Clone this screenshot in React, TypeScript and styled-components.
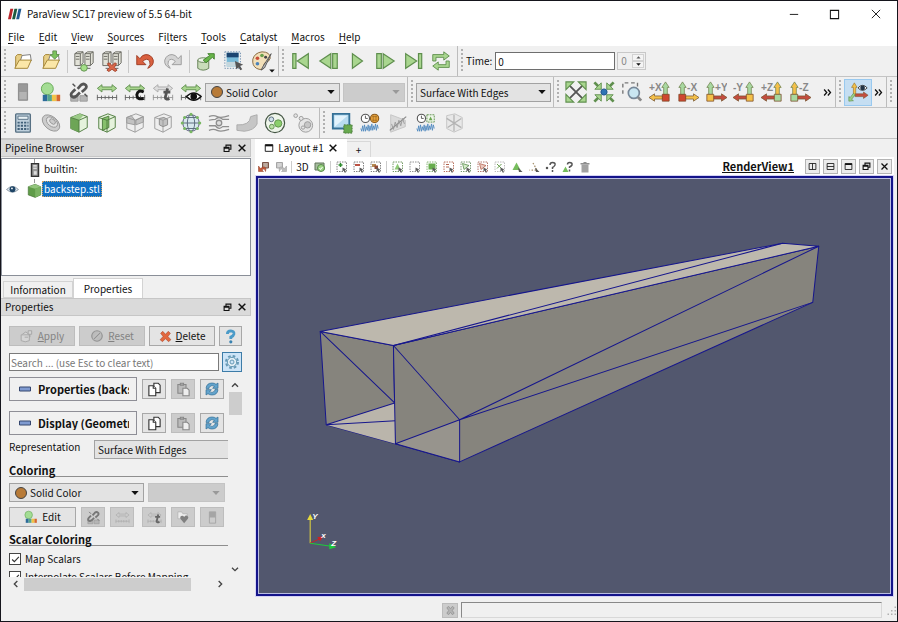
import React from 'react';
import styled, { createGlobalStyle, css } from 'styled-components';

const UI = `"Noto Sans CJK JP", "Liberation Sans", sans-serif`;
const G = '#a9d68f';
const GD = '#5f8f4e';
const GR = '#8f8f8f';

const Global = createGlobalStyle`
  * { box-sizing: border-box; }
  body { margin: 0; background: #f0f0f0; }
  button, input, select { font: inherit; color: inherit; margin: 0; padding: 0; }
  body, #root { font-family: ${UI}; font-size: 10px; line-height: 14px; color: #111; }
`;

/* ---------- icon drawings, 24 x 24 ---------- */

const Arrow4 = ({ out }: { out: boolean }) => (
  <>
    {out && <path d="M5 5L19 19M19 5L5 19" stroke="#555" strokeWidth="2" />}
    {[0, 90, 180, 270].map((r) => (
      <g key={r} transform={`rotate(${r} 12 12)`}>
        {out ? (
          <path d="M1 1H9.500L1 9.500Z" fill={G} stroke={GD} strokeWidth="1.200" />
        ) : (
          <>
            <path d="M1.500 1.500L6 6" stroke={GD} strokeWidth="3" />
            <path d="M9 2V9H2Z" fill={G} stroke={GD} />
          </>
        )}
      </g>
    ))}
    {!out && <circle cx="12" cy="12" r="3.4" fill="#2f74b5" stroke="#1f5288" />}
  </>
);

const Folder = () => (
  <>
    <path d="M4 20V7l2-2h4l2 2h6v5" fill="#e8cf86" stroke="#a08030" />
    <path d="M9 12l2-6 9-1 1 7" fill="#fff" stroke="#777" />
    <path d="M3 20L8 11H21L17 20Z" fill="#fbe7a8" stroke="#a08030" />
  </>
);

const Servers = () => (
  <>
    {[2, 13].map((x) => (
      <g key={x}>
        <path d={`M${x} 4l3-2h6v12l-3 3h-6z`} fill="#e2e2d8" stroke="#66665e" />
        <path d={`M${x} 4h6v13M${x + 6} 4l3-2M${x + 1} 7h4M${x + 1} 10h4`} fill="none" stroke="#66665e" />
      </g>
    ))}
    <path d="M5 20h14" stroke="#555" />
  </>
);

const Cube = ({ gray, inner }: { gray?: boolean; inner?: React.ReactNode }) => (
  <>
    <path d="M3 6L13 2L21 5V17L12 22L3 18Z" fill={gray ? '#eee' : '#e5f2dc'} stroke={gray ? '#999' : '#4c7a3c'} />
    {inner}
    <path d="M3 6L12 9L21 5M12 9V22" fill="none" stroke={gray ? '#999' : '#4c7a3c'} />
  </>
);

const Ruler = ({ c = '#666', a = G, s = GD }: { c?: string; a?: string; s?: string }) => (
  <>
    <path d="M1.5 8L6.5 4V6.5H17.500V4L22.500 8L17.500 12V9.500H6.500V12Z" fill={a} stroke={s} />
    <path d="M1 18H23M1.500 15V21M6 16V20M10 16V20M14 16V20M18 16V20M22.500 15V21" stroke={c} fill="none" />
  </>
);

const Chain = ({ c = '#555' }: { c?: string }) => (
  <>
    <path d="M3 16h8v6H3zM13 16h8v6h-8z" fill="#b5b5b5" stroke="#999" />
    <path d="M10.500 8.500L14 4.500Q17 2 19.500 4.500Q21 7 18.500 9L15 12M13 12.500L9 16.500Q6 19 3.800 16.500Q2.500 14 5 12L8 9" fill="none" stroke={c} strokeWidth="3" />
    <path d="M5 3l3 3M18 14l3 3" stroke={c} strokeWidth="1.600" />
  </>
);

const Axis = ({ up, side, box, left, label }: { up: string; side: string; box: string; left: boolean; label: string }) => (
  <>
    <g transform={left ? undefined : 'translate(24 0) scale(-1 1)'}>
      <path d="M0 18L6 14V16.300H15V19.700H6V22Z" fill={side} stroke="#77552f" strokeWidth=".8" />
      <path d="M18 1L22 7H20V15H16V7H14Z" fill={up} stroke="#6c7f4a" strokeWidth=".8" />
      <path d="M14.500 14.500H22V22H14.500Z" fill={box} stroke="#774422" strokeWidth=".8" />
    </g>
    <text x={left ? 0 : 11} y="11" fontSize="11" fontFamily="Liberation Sans" fontWeight="bold" fill="#888">{label}</text>
  </>
);

const Plot = ({ gray }: { gray?: boolean }) => (
  <path d="M2 18l1 3 1-6 1 6 1-7 1 7 1-5 1 4 1-6 1 7 1-6 1 5 1-7 1 7 1-5 1 4 1-6 1 7 1-6 1 4" fill="none" stroke={gray ? '#999' : '#4a86bd'} strokeWidth=".9" />
);
const Clock = () => (
  <>
    <circle cx="7" cy="7" r="4.500" fill="#fff" stroke="#555" strokeWidth="1.200" />
    <path d="M7 4V7H9.500" fill="none" stroke="#555" />
  </>
);

const Sel = ({ c = '#777', children }: { c?: string; children?: React.ReactNode }) => (
  <>
    <rect x="2" y="2" width="19" height="19" fill="none" stroke={c} strokeWidth="1.800" strokeDasharray="3 2" />
    {children}
    <path d="M13 13L21 17L18 18L20 23L17 23L16 19L13 21Z" fill="#5a5a5a" />
  </>
);

const drawings: Record<string, React.ReactNode> = {
  open: <Folder />,
  save: <><Folder /><path d="M14 1h4v4h3l-5 5-5-5h3z" fill="#7cc35c" stroke={GD} /></>,
  connect: <><Servers /><circle cx="12" cy="19.500" r="3.600" fill="#a5e089" stroke={GD} /></>,
  disconnect: <><Servers /><path d="M7 15l2-1 3 3 3-3 2 1-2.500 4 3 3-2 1.500-3.500-2.500-3.500 2.500-2-1.500 3-3z" fill="#d9684a" stroke="#a2432c" /></>,
  undo: <path d="M3 6V16H13L9.500 12.500Q14 8 17 12Q19 15.500 15 20Q22 17 21 11Q19 5 13 5Q9 5 6.500 9.500Z" fill="#d9603f" stroke="#9c3b22" />,
  redo: <path d="M21 6V16H11L14.500 12.500Q10 8 7 12Q5 15.500 9 20Q2 17 3 11Q5 5 11 5Q15 5 17.500 9.500Z" fill="#d4d4d4" stroke="#999" />,
  load: <><path d="M3 11V20Q9 24 15 20V11" fill="#c9dcb9" stroke="#5f7d50" /><ellipse cx="9" cy="11" rx="6" ry="2.500" fill="#edf3e8" stroke="#5f7d50" /><path d="M9 11L16 6L14 4H21V10L19 8L12 14Z" fill="#68b54a" stroke="#3f7e2b" /></>,
  find: <><path d="M4 3H17V18H4Z" fill="#78bad8" /><path d="M4 3H17V8H4Z" fill="#1c4570" /><path d="M4 13H17V18H4Z" fill="#c5d6dc" /><path d="M2 2H19V20H2Z" fill="none" stroke="#68a" strokeDasharray="1.500 1.500" /><path d="M13 12L22 16L18.500 17.500L21 21L19 22L17 19L14.500 21Z" fill="#555" /></>,
  palette: <><path d="M12 2Q21 2 21 9Q20 13 15 14Q13 16 15 19Q12 23 6 20Q1 17 2 10Q4 3 12 2Z" fill="#f2dfb8" stroke="#80633a" /><circle cx="7" cy="9" r="2" fill="#c94d38" /><circle cx="12" cy="6" r="2" fill="#68a04a" /><circle cx="16" cy="8" r="1.600" fill="#444" /><circle cx="7" cy="15" r="2" fill="#4c83ba" /><path d="M22 4L13 18L11 22L15 19Z" fill="#bbb" stroke="#555" /></>,
  first: <path d="M3 4H6.500V20H3ZM20 4V20L8 12Z" fill={G} stroke={GD} strokeWidth="1.300" />,
  prev: <path d="M14 4V20L2 12ZM16 4H21V20H16Z" fill={G} stroke={GD} strokeWidth="1.300" />,
  play: <path d="M7 4L18 12L7 20Z" fill={G} stroke={GD} strokeWidth="1.300" />,
  next: <path d="M3 4H8V20H3ZM10 4L22 12L10 20Z" fill={G} stroke={GD} strokeWidth="1.300" />,
  last: <path d="M4 4L16 12L4 20ZM18 4H21.500V20H18Z" fill={G} stroke={GD} strokeWidth="1.300" />,
  loop: <path d="M3 12V5H15V2L21 6.500L15 11V8H6.500V12ZM21 12V19H9V22L3 17.500L9 13V16H17.500V12Z" fill={G} stroke={GD} />,
  bar: <><path d="M7 3H17V21H7Z" fill="#999" stroke="#888" /><path d="M8 12H16V20H8Z" fill="#b4b4b4" /></>,
  colormap: <><circle cx="8" cy="8.500" r="6.500" fill="#a4dd94" stroke="#62a552" /><path d="M3 15H8V22H3Z" fill="#2c6b99" /><path d="M8 15H13V22H8Z" fill="#55a48d" /><path d="M13 15H18V22H13Z" fill="#f0c348" /><path d="M18 15H22V22H18Z" fill="#d6672f" /></>,
  chain: <Chain />,
  ruler: <Ruler />,
  rulerC: <><Ruler /><path d="M21.500 12Q15 9 14 15Q14 21 21.500 19" fill="none" stroke="#111" strokeWidth="3.200" /></>,
  rulerT: <><Ruler a="#ddd" s="#aaa" c="#999" /><path d="M17 8L14.500 18Q15 21 19 19M12.500 12H20" fill="none" stroke="#555" strokeWidth="3" /></>,
  rulerEye: <><Ruler /><path d="M7 17Q15 9 23 17Q15 25 7 17Z" fill="#fff" stroke="#111" strokeWidth="1.600" /><circle cx="15" cy="17" r="3.600" fill="#111" /></>,
  calc: <><rect x="4" y="2" width="16" height="20" rx="1" fill="#bfd0dc" stroke="#577083" strokeWidth="1.500" /><path d="M6.500 4.500H17.500V8H6.500Z" fill="#e8f1f5" stroke="#577083" /><path d="M6 11.500H18M6 15H18M6 18.500H18" stroke="#416079" strokeWidth="2" strokeDasharray="2.400 1.200" /></>,
  contour: <g fill="#ccc" stroke="#999"><ellipse cx="12" cy="12" rx="11" ry="7" transform="rotate(40 12 12)" /><ellipse cx="13" cy="11" rx="7" ry="4.500" fill="#e2e2e2" transform="rotate(40 13 11)" /><ellipse cx="14" cy="10.500" rx="3.600" ry="2.300" transform="rotate(40 14 10)" /></g>,
  clip: <Cube inner={<><path d="M3 6L12 9V22L3 18Z" fill="#6da556" /><path d="M3 6L13 2L17 3.500L12 9Z" fill="#9ccb88" /></>} />,
  slice: <Cube inner={<path d="M7 7L14 4.500V17L7 20Z" fill="#86c06c" stroke="#4c7a3c" />} />,
  threshold: <Cube gray inner={<path d="M3 6L8 4L12 9V14L3 12ZM13 9L21 5V11L13 14Z" fill="#c2c2c2" stroke="#999" />} />,
  subset: <Cube gray inner={<path d="M8 7L13 6L17 8V14L12 16L8 14Z" fill="#c2c2c2" stroke="#888" />} />,
  glyph: <><circle cx="12" cy="12" r="9" fill="#d8e8ee" stroke="#557" /><ellipse cx="12" cy="12" rx="4" ry="9" fill="none" stroke="#567" /><path d="M3 12H21M5 6H19M5 18H19" stroke="#567" />{[[12, 2.500], [12, 21.500], [2.500, 12], [21.500, 12], [5, 6], [19, 6], [5, 18], [19, 18]].map(([x, y]) => <circle key={`${x}-${y}`} cx={x} cy={y} r="1.700" fill="#78b762" />)}</>,
  stream: <g fill="none" stroke={GR} strokeWidth="1.400"><path d="M1 5Q6 3 10 5T23 4M1 9Q5 8 8 8Q12 4 16 8H23M1 15H8Q12 20 16 16H23M1 20Q6 18 10 20T23 19" /><circle cx="12" cy="12" r="3" fill="#ddd" /></g>,
  warp: <path d="M1 14Q15 15 16 5L23 3V13Q20 20 9 21L1 20Z" fill="#c6c6c6" stroke="#aaa" />,
  group: <><circle cx="12" cy="12" r="10.500" fill="#eef5ea" stroke="#454" strokeWidth="1.300" /><circle cx="8" cy="8" r="2.600" fill="#cfe0ea" stroke="#567" /><circle cx="15.500" cy="12.500" r="4" fill="#8bcf6c" stroke={GD} /><circle cx="8.500" cy="16" r="2.600" fill="#b9e0a5" stroke={GD} /></>,
  extract: <g fill="#e5e5e5" stroke="#999"><circle cx="15" cy="14.500" r="7.500" /><circle cx="4" cy="4" r="2" /><circle cx="10" cy="7" r="2.200" /><circle cx="17" cy="14" r="3.500" fill="#c6c6c6" /><circle cx="12" cy="17" r="1.800" /></g>,
  selView: <><path d="M2 2H20V18H2Z" fill="#b8dcf1" stroke="#347096" strokeWidth="2" /><path d="M4 4H18L4 16Z" fill="#e2f3fc" /><path d="M14 14H23V23H14Z" fill="#68a94f" stroke="#47773a" strokeDasharray="2 1" /></>,
  plotClock: <><Clock /><circle cx="17" cy="7" r="4.500" fill="#e8a33c" stroke="#8a5a1c" strokeWidth="1.200" /><path d="M14.500 5H19.500M14.500 9H19.500M15.500 4V10M18.500 4V10" stroke="#9b6a24" strokeWidth=".8" /><Plot /></>,
  plotLine: <><path d="M4 3L20 9V16L4 22Z" fill="#dadada" stroke="#c4c4c4" /><path d="M3 20L21 5" stroke="#888" strokeWidth="1.300" /><path d="M5 13l2 6 2-8 2 6 2-8 2 6 2-8 2 6" fill="none" stroke="#999" /></>,
  plotSel: <><Clock /><path d="M13 3H21V11H13Z" fill="#edf6e8" stroke={GD} strokeDasharray="2 1" /><path d="M17 5l2 4h-4z" fill="#69a64f" /><Plot /></>,
  probe: <g stroke="#c4c4c4" fill="#e8e8e8"><path d="M4 4L13 2L21 6V18L12 22L4 18Z" /><path d="M12 3V21M4 7L20 17M20 7L5 17" stroke="#b4b4b4" strokeWidth="1.400" /></g>,
  reset: <Arrow4 out />,
  zoomData: <Arrow4 out={false} />,
  zoomBox: <><path d="M2 14V2H18V8" fill="none" stroke="#777" strokeWidth="1.500" strokeDasharray="4 3" /><circle cx="14" cy="13" r="6" fill="#c9e6f2" stroke="#789" strokeWidth="1.800" /><path d="M18.500 17.500L22 21.500" stroke="#888" strokeWidth="3" /></>,
  px: <Axis left label="+X" up="#a8d8a0" side="#f4c04a" box="#cf4730" />,
  nx: <Axis left={false} label="-X" up="#a8d8a0" side="#f4c04a" box="#cf4730" />,
  py: <Axis left={false} label="+Y" up="#a8d8a0" side="#c44c3e" box="#f4c04a" />,
  ny: <Axis left label="-Y" up="#a8d8a0" side="#c44c3e" box="#f4c04a" />,
  pz: <Axis left label="+Z" up="#f4c04a" side="#c44c3e" box="#a8d8a0" />,
  nz: <Axis left={false} label="-Z" up="#f4c04a" side="#c44c3e" box="#a8d8a0" />,
  axes: <><path d="M8 2L11 7H9.500V16H7V7H5Z" fill="#f4c04a" stroke="#98752a" strokeWidth=".7" /><path d="M9 14H18V12L23 15.500L18 19V17H9Z" fill="#c44c3e" stroke="#853" strokeWidth=".7" /><path d="M9 15L5 20L7 21.500L2 22V17L3.500 18L7 13.500Z" fill="#9ad08a" stroke={GD} strokeWidth=".7" /><path d="M12 7.500Q17 2 22 7.500Q17 13 12 7.500Z" fill="#fff" stroke="#333" /><circle cx="17" cy="7.500" r="2.600" fill="#234" /></>,
  eye: <><path d="M1 12Q12 1 23 12Q12 22 1 12Z" fill="#dfe9f2" stroke="#7a8894" strokeWidth="1.500" /><circle cx="12" cy="11.500" r="5.500" fill="#1f4566" /><circle cx="11" cy="10" r="1.600" fill="#fff" /></>,
  server: <><path d="M6 1H18V23H6Z" fill="#999" stroke="#333" strokeWidth="2.500" /><path d="M9 5H15M9 9H15" stroke="#eee" strokeWidth="2" /><path d="M10 14H15V20H10Z" fill="#ddd" /></>,
  solid: <><path d="M2 6L13 2L22 6V19L13 23L2 19Z" fill="#5f9b48" stroke="#456f35" /><path d="M2 6L13 2L22 6L13 9Z" fill="#93c57d" /><path d="M13 9L22 6V19L13 23Z" fill="#7ab262" /></>,
  apply: <g fill="#d5d5d5" stroke="#a3a3a3" strokeWidth="1.500"><path d="M2 10H16V20Q9 24 2 20Z" /><path d="M4 9L10 5L14 8M14 3h6v6h-6zM17 9v5" /><path d="M8 14h6" /></g>,
  no: <g fill="#bcbcbc" stroke="#949494" strokeWidth="2"><circle cx="12" cy="12" r="9" /><path d="M6 18L18 6" strokeWidth="4" stroke="#d4d4d4" /><path d="M6 18L18 6" /></g>,
  del: <path d="M3 6L7 2.500L12 8L17 2.500L21 6L16.500 12L22 18L17.500 21.500L12 16L6.500 21.500L2 18L7.500 12Z" fill="#e2683f" stroke="#a8452a" />,
  help: <><path d="M7 8Q7 3 12.500 3Q18 3.500 17.500 8Q17 11 12.500 13V16" fill="none" stroke="#4b9bc8" strokeWidth="4.500" /><circle cx="12.500" cy="20.500" r="2.500" fill="#3982b0" /></>,
  gear: <><circle cx="12" cy="12" r="9" fill="none" stroke="#6699b5" strokeWidth="3" strokeDasharray="4 3.060" /><circle cx="12" cy="12" r="7" fill="#e4eff5" stroke="#6699b5" strokeWidth="1.500" /><circle cx="12" cy="12" r="3" fill="#cde4f7" stroke="#6699b5" strokeWidth="1.500" /></>,
  copy: <g fill="#fff" stroke="#333" strokeWidth="1.800"><path d="M11 2H18L21 5V17H11Z" /><path d="M3 6H10L14 10V22H3Z" /><path d="M10 6V10H14" /></g>,
  paste: <g fill="#bbb" stroke="#888" strokeWidth="1.800"><path d="M3 4H16V18H3Z" /><path d="M7 2h5v3H7z" /><path d="M11 10H18L21 13V22H11Z" fill="#eee" /></g>,
  refresh: <g fill="#62a3cc" stroke="#2f6b93" strokeWidth="1"><path d="M3 11Q4 3 12 3Q16 3 18 5L21 3V11H13L15.500 8Q12 5 8 9L7 12Z" /><path d="M21 13Q20 21 12 21Q8 21 6 19L3 21V13H11L8.500 16Q12 19 16 15L17 12Z" /></g>,
  grayChain: <Chain c="#777" />,
  grayRuler: <Ruler a="#ccc" s="#aaa" c="#aaa" />,
  grayRulerT: <><Ruler a="#ccc" s="#aaa" c="#aaa" /><path d="M18 7L15.500 18Q16 21 20 19M13 11H21" fill="none" stroke="#666" strokeWidth="3" /></>,
  heart: <><path d="M3 3H9L11 6H18V14H3Z" fill="#ececec" stroke="#aaa" /><path d="M13 21L7 14Q6 9 10 9Q12 9 13 11Q15 8 18 9Q21 11 19 14Z" fill="#808080" /></>,
  grayBar: <><path d="M7 3H17V21H7Z" fill="#ccc" stroke="#a5a5a5" strokeWidth="1.500" /><path d="M7 3H17V12H7Z" fill="#a5a5a5" /></>,
  camUndo: <><path d="M9 3H21V14H9Z" fill="#b09a8e" stroke="#7b5346" strokeWidth="2" /><path d="M12 6H18M12 10H18" stroke="#e5d8d0" /><path d="M1 10V21H11L8 18Q13 13 15 21Q18 11 10 12L5 15Z" fill="#c4593a" stroke="#8d3a22" /></>,
  camRedo: <><path d="M3 3H15V14H3Z" fill="#ccc" stroke="#a5a5a5" strokeWidth="2" /><path d="M6 6H12M6 10H12" stroke="#eee" /><path d="M23 10V21H13L16 18Q11 13 9 21Q6 11 14 12L19 15Z" fill="#bcbcbc" stroke="#999" /></>,
  camera: <><path d="M2 4H20V18H2Z" fill="#a8bda0" stroke="#60755a" strokeWidth="2" /><circle cx="14" cy="14" r="7" fill="#9cd585" stroke="#58884a" strokeWidth="2" /><path d="M11 14l2 3 4-5" fill="none" stroke="#fff" strokeWidth="2" /></>,
  selAdd: <Sel><path d="M5 8H13M9 4V12" stroke="#2e8b2e" strokeWidth="3" /></Sel>,
  selSub: <Sel><path d="M4 8H14" stroke="#b23a2a" strokeWidth="3.500" /></Sel>,
  selTog: <Sel><path d="M4 6H12V12H4Z" fill="#b78a52" /><path d="M9 9H16V16H9Z" fill="#8f4936" /></Sel>,
  sCells: <Sel c="#699158"><path d="M11 5L17 17H5Z" fill="#8fcb76" /></Sel>,
  sPts: <Sel c="#888" />,
  sFrC: <Sel c="#7fae6d"><path d="M5 5H19V17H5Z" fill="#67ad4d" /></Sel>,
  sFrP: <Sel c="#b36550"><path d="M6 7H12M6 12H12" stroke="#b36550" strokeWidth="2" /></Sel>,
  sPoC: <Sel c="#6f8f66"><path d="M5 5L18 9L8 17Z" fill="#d5ebcb" stroke="#4f8740" strokeWidth="1.500" /></Sel>,
  sPoP: <Sel c="#a96a5d"><path d="M5 5L18 9L8 17Z" fill="#eac9c0" stroke="#b35d49" strokeWidth="1.500" /></Sel>,
  sBlk: <Sel c="#b5b5b5"><path d="M6 6L15 15M15 6L6 15" stroke="#69a050" strokeWidth="2" /></Sel>,
  iC: <><path d="M11 3L19 18H3Z" fill="#76bd5c" /><path d="M14 13L23 22H16Z" fill="#555" /></>,
  iP: <><path d="M10 4L18 18H3" fill="none" stroke="#a48d68" strokeWidth="2.500" strokeDasharray="3 3" /><path d="M14 13L23 22H16Z" fill="#555" /></>,
  hP: <><path d="M10 8Q10 3 15 3Q21 3 20 8Q18 12 15 13V16M15 18V22" fill="none" stroke="#555" strokeWidth="3" /><circle cx="4" cy="14" r="2.500" fill="#555" /></>,
  hC: <><path d="M11 7Q11 3 15 3Q21 3 20 8Q18 11 15 12V14M15 17V21" fill="none" stroke="#555" strokeWidth="3" /><path d="M7 11L13 22H1Z" fill="#76bd5c" /></>,
  trash: <><path d="M5 7H19V23H5Z" fill="#a2a2a2" /><path d="M3 4H21V7H3ZM9 2H15V4H9Z" fill="#8f8f8f" /></>,
  stop: <path d="M4 6L8 3L12 8L16 3L20 6L16 12L20 18L16 21L12 16L8 21L4 18L8 12Z" fill="#b3b3b3" stroke="#8c8c8c" strokeWidth="1.500" />,
  winSplitH: <path d="M3 4H21V20H3ZM12 4V20" fill="none" stroke="#111" strokeWidth="2.200" />,
  winSplitV: <path d="M3 4H21V20H3ZM3 12H21" fill="none" stroke="#111" strokeWidth="2.200" />,
  winMax: <><path d="M3 4H21V20H3Z" fill="none" stroke="#111" strokeWidth="2.200" /><path d="M3 6H21" stroke="#111" strokeWidth="4" /></>,
  winFloat: <><path d="M8 8V3H21V14H16" fill="none" stroke="#111" strokeWidth="3" /><path d="M3 9H16V20H3ZM3 11H16" fill="none" stroke="#111" strokeWidth="3" /></>,
  close: <path d="M4 4L20 20M20 4L4 20" stroke="#111" strokeWidth="3.500" />,
  thinClose: <path d="M2 2L22 22M22 2L2 22" stroke="#111" strokeWidth="2.200" />,
  thinMax: <path d="M3 3H21V21H3Z" fill="none" stroke="#111" strokeWidth="2.200" />,
  thinMin: <path d="M2 13H22" stroke="#111" strokeWidth="2.200" />,
  dots: <circle cx="12" cy="12" r="11" fill="#b87b38" stroke="#444" strokeWidth="2" />,
  down: <path d="M1 6H23L12 18Z" fill="#111" />,
  downGray: <path d="M1 6H23L12 18Z" fill="#999" />,
  up: <path d="M2 17H22L12 6Z" fill="#555" />,
  chevUp: <path d="M3 17L12 8L21 17" fill="none" stroke="#444" strokeWidth="4" />,
  chevDown: <path d="M3 8L12 17L21 8" fill="none" stroke="#444" strokeWidth="4" />,
  chevLeft: <path d="M16 3L7 12L16 21" fill="none" stroke="#444" strokeWidth="4" />,
  chevRight: <path d="M8 3L17 12L8 21" fill="none" stroke="#444" strokeWidth="4" />,
  more: <path d="M3 4L10 12L3 20M13 4L20 12L13 20" fill="none" stroke="#111" strokeWidth="3.500" />,
  minus: <path d="M1 8H23V16H1Z" fill="#7f9ad0" stroke="#34466f" strokeWidth="2" />,
  tick: <path d="M3 12L9 18L21 5" fill="none" stroke="#333" strokeWidth="3" />,
  logo: <><path d="M4 3H9L5 21H0Z" fill="#b8252b" /><path d="M11 3H16L12 21H7Z" fill="#1d5a40" /><path d="M18 3H23L19 21H14Z" fill="#205a92" /></>,
  grip: <path d="M19 5h3v3h-3zM19 12h3v3h-3zM19 19h3v3h-3zM12 12h3v3h-3zM12 19h3v3h-3zM5 19h3v3H5z" fill="#b0b0b0" />,
};

const Svg = styled.svg<{ $s: number }>`
  width: ${(p) => p.$s}px;
  height: ${(p) => p.$s}px;
  flex: none;
  display: block;
`;
const Icon = ({ n, s = 22, className }: { n: string; s?: number; className?: string }) => (
  <Svg $s={s} className={className} viewBox="0 0 24 24" fill="none" aria-hidden="true">{drawings[n]}</Svg>
);

/* ---------- window frame ---------- */

const Window = styled.div`
  min-height: 100vh;
  display: flex;
  flex-direction: column;
  border: 1px solid #15151c;
  background: #f0f0f0;
  overflow: hidden;
`;
const TitleBar = styled.header`
  height: 26px;
  flex: none;
  display: flex;
  align-items: center;
  background: #fff;
  padding: 0 1px 0 7px;
`;
const AppTitle = styled.h1`
  flex: 1;
  margin: 0 0 0 5px;
  font: 400 10px/16px ${UI};
`;
const FrameButton = styled.button`
  width: 41px;
  height: 26px;
  border: 0;
  background: none;
  display: grid;
  place-items: center;
`;
const MenuBar = styled.nav`
  height: 19px;
  flex: none;
  display: flex;
  align-items: center;
  gap: 14px;
  padding-left: 7px;
  background: #fff;
`;
const MenuItem = styled.button`
  border: 0;
  background: none;
  line-height: 16px;
  u { text-underline-offset: 2px; }
`;

/* ---------- toolbars ---------- */

const ToolRow = styled.div`
  height: 31px;
  flex: none;
  display: flex;
  border-bottom: 1px solid #c4c4c4;
  overflow: hidden;
`;
const Bar = styled.div<{ $grow?: boolean; $end?: boolean }>`
  display: flex;
  align-items: center;
  flex: ${(p) => (p.$grow ? '1 0 auto' : 'none')};
  border-right: ${(p) => (p.$end ? 0 : '1px solid #bcbcbc')};
  padding-right: 2px;
  &::before {
    content: '';
    width: 2px;
    height: 24px;
    margin: 0 3px;
    background: repeating-linear-gradient(#b0b0b0 0 2px, transparent 2px 4px);
  }
`;
const ToolButton = styled.button<{ $on?: boolean; $w?: number }>`
  width: ${(p) => p.$w ?? 28}px;
  height: 27px;
  border: 1px solid ${(p) => (p.$on ? '#99c9ef' : 'transparent')};
  background: ${(p) => (p.$on ? '#c5def2' : 'none')};
  display: grid;
  place-items: center;
`;
const Corner = styled(Icon)`
  grid-area: 1 / 1;
  place-self: end;
`;
const Stacked = styled(Icon)`
  grid-area: 1 / 1;
`;
const Rule = styled.span`
  width: 1px;
  height: 23px;
  margin: 0 2px;
  background: #c8c8c8;
`;
const Spacer = styled.span`
  flex: 1;
`;

const SelectBox = styled.span<{ $w: number; $off?: boolean; $ml?: number }>`
  display: grid;
  align-items: center;
  width: ${(p) => p.$w}px;
  height: 19px;
  flex: none;
  margin-left: ${(p) => p.$ml ?? 0}px;
  border: 1px solid ${(p) => (p.$off ? '#c4c4c4' : '#a2a2a2')};
  background: ${(p) => (p.$off ? '#cccccc' : '#e3e3e3')};
`;
const Native = styled.select<{ $dot?: boolean }>`
  grid-area: 1 / 1;
  width: 100%;
  height: 17px;
  appearance: none;
  border: 0;
  background: none;
  padding-left: ${(p) => (p.$dot ? 20 : 3)}px;
  line-height: 17px;
`;
const DotMark = styled(Icon)`
  grid-area: 1 / 1;
  margin-left: 5px;
`;
const DropMark = styled(Icon)`
  grid-area: 1 / 1;
  justify-self: end;
  margin-right: 4px;
`;
const Combo = ({ label, text, w, off, dot, ml }: { label: string; text: string; w: number; off?: boolean; dot?: boolean; ml?: number }) => (
  <SelectBox $w={w} $off={off} $ml={ml}>
    <Native aria-label={label} disabled={off} $dot={dot}><option>{text}</option></Native>
    {dot && <DotMark n="dots" s={12} />}
    <DropMark n={off ? 'downGray' : 'down'} s={8} />
  </SelectBox>
);

const TimeLabel = styled.label`
  display: flex;
  align-items: center;
  gap: 3px;
`;
const TimeInput = styled.input`
  width: 120px;
  height: 18px;
  border: 1px solid #6e6e6e;
  background: #fff;
  padding-left: 2px;
`;
const Spin = styled.span`
  display: flex;
  align-items: center;
  width: 29px;
  height: 18px;
  margin-left: 2px;
  border: 1px solid #c8c8c8;
  color: #888;
`;
const SpinInput = styled.input`
  width: 14px;
  border: 0;
  background: none;
  padding-left: 3px;
`;
const SpinArrows = styled.span`
  display: flex;
  flex-direction: column;
`;
const SpinButton = styled.button`
  width: 12px;
  height: 7px;
  border: 1px solid #d2d2d2;
  background: #f4f4f4;
  display: grid;
  place-items: center;
`;

/* ---------- docks ---------- */

const Main = styled.main`
  flex: 1;
  display: flex;
  min-height: 0;
`;
const Side = styled.aside`
  width: 250px;
  flex: none;
  display: flex;
  flex-direction: column;
`;
const DockTitle = styled.div`
  height: 18px;
  flex: none;
  display: flex;
  align-items: center;
  gap: 5px;
  padding: 0 3px 0 4px;
  background: #dadada;
  border: 1px solid #c6c6c6;
  border-left: 0;
`;
const DockName = styled.h2`
  flex: 1;
  margin: 0;
  font: inherit;
`;
const Plain = styled.button`
  border: 0;
  background: none;
  display: grid;
  place-items: center;
`;
const Tree = styled.div`
  flex: none;
  height: 118px;
  margin-top: 1px;
  border: 1px solid #8a8f98;
  background: #fff;
`;
const TreeRow = styled.div`
  height: 20px;
  display: grid;
  grid-template-columns: 25px 15px auto;
  align-items: center;
  justify-content: start;
  justify-items: center;
`;
const EyeMark = styled(Icon)`
  justify-self: start;
  margin-left: 4px;
`;
const Node = styled.span`
  height: 20px;
  display: flex;
  flex-direction: column;
  align-items: center;
  &::before {
    content: '';
    width: 1px;
    height: 4px;
    background: #999;
  }
`;
const TreeName = styled.span<{ $sel?: boolean }>`
  justify-self: start;
  line-height: 16px;
  padding: 0 2px;
  ${(p) => p.$sel && css`background: #1071c4; color: #fff; outline: 1px dotted #cda36a; outline-offset: -1px;`}
`;
const Tabs = styled.div`
  height: 21px;
  flex: none;
  display: flex;
  align-items: flex-end;
  padding-left: 2px;
  margin-top: 1px;
`;
const Tab = styled.button<{ $on?: boolean }>`
  width: 70px;
  height: ${(p) => (p.$on ? 20 : 17)}px;
  border: 1px solid #d3d3d3;
  border-bottom: ${(p) => (p.$on ? 0 : 1)}px solid #d3d3d3;
  background: ${(p) => (p.$on ? '#fff' : '#f0f0f0')};
`;
const Panel = styled.section`
  padding: 10px 9px 0 8px;
  flex: 1;
  display: flex;
  flex-direction: column;
`;
const Line = styled.div<{ $gap?: number; $top?: number }>`
  display: flex;
  align-items: center;
  gap: ${(p) => p.$gap ?? 4}px;
  margin-top: ${(p) => p.$top ?? 0}px;
`;
const Cluster = styled.div`
  display: flex;
  gap: 5px;
  margin-left: 3px;
`;
const PushButton = styled.button<{ $w: number; $off?: boolean; $blue?: boolean }>`
  width: ${(p) => p.$w}px;
  height: 20px;
  flex: none;
  display: flex;
  align-items: center;
  justify-content: center;
  gap: 4px;
  border: 1px solid ${(p) => (p.$blue ? '#3d7ca8' : p.$off ? '#bdbdbd' : '#a8a8a8')};
  background: ${(p) => (p.$blue ? '#cde4f7' : p.$off ? '#cccccc' : '#e4e4e4')};
  color: ${(p) => (p.$off ? '#838383' : '#111')};
`;
const Search = styled.input`
  flex: 1;
  min-width: 0;
  height: 18px;
  border: 1px solid #7a7a7a;
  background: #fff;
  padding-left: 1px;
  &::placeholder { color: #777; opacity: 1; }
`;
const ScrollGrid = styled.div`
  margin-top: 5px;
  display: grid;
  grid-template-columns: 1fr 14px;
  grid-template-rows: 200px 14px;
`;
const Viewport = styled.div`
  overflow: hidden;
`;
const Content = styled.div`
  width: 260px;
`;
const GroupButton = styled.button`
  width: 128px;
  height: 24px;
  display: flex;
  align-items: center;
  gap: 7px;
  padding: 0 7px 0 9px;
  border: 1px solid #8e8e96;
  background: #f0f0f0;
  font-weight: 700;
  font-size: 11px;
`;
const Clip = styled.span`
  flex: 1;
  overflow: hidden;
  white-space: nowrap;
  text-align: left;
`;
const FieldLabel = styled.label`
  width: 81px;
  align-self: flex-start;
`;
const Heading = styled.h3<{ $top: number }>`
  margin: ${(p) => p.$top}px 0 0;
  height: 13px;
  font: 700 11px/12px ${UI};
  border-bottom: 1px solid #8e8e8e;
`;
const Check = styled.label<{ $top: number }>`
  display: flex;
  align-items: center;
  gap: 4px;
  margin-top: ${(p) => p.$top}px;
`;
const CheckBox = styled.span`
  width: 12px;
  height: 12px;
  display: grid;
  input {
    grid-area: 1 / 1;
    appearance: none;
    width: 12px;
    height: 12px;
    border: 1px solid #444;
    background: #fff;
  }
  svg { grid-area: 1 / 1; place-self: center; }
`;
const VScroll = styled.div`
  display: flex;
  flex-direction: column;
  align-items: center;
  justify-content: space-between;
  padding: 4px 0;
`;
const VThumb = styled.div`
  width: 13px;
  height: 23px;
  margin: 3px 0 auto;
  background: #cdcdcd;
`;
const HScroll = styled.div`
  display: flex;
  align-items: center;
  justify-content: space-between;
  padding: 0 4px 0 3px;
`;
const HThumb = styled.div`
  width: 167px;
  height: 13px;
  margin: 0 auto 0 4px;
  background: #cdcdcd;
`;

/* ---------- view ---------- */

const Work = styled.section`
  flex: 1;
  min-width: 0;
  display: flex;
  flex-direction: column;
  margin: 0 3px 0 4px;
`;
const LayoutTabs = styled.div`
  height: 18px;
  flex: none;
  display: flex;
  align-items: flex-end;
`;
const LayoutTab = styled.button<{ $w: number; $on?: boolean }>`
  width: ${(p) => p.$w}px;
  height: ${(p) => (p.$on ? 18 : 16)}px;
  display: flex;
  align-items: center;
  justify-content: center;
  gap: 4px;
  border: 0 solid #d8d8d8;
  border-width: ${(p) => (p.$on ? 0 : '1px 1px 0 0')};
  background: ${(p) => (p.$on ? '#fff' : '#f0f0f0')};
`;
const ViewBar = styled.div`
  height: 19px;
  flex: none;
  display: flex;
  align-items: center;
  background: #fff;
  padding: 0 2px 0 0;
`;
const MiniButton = styled.button`
  width: 17px;
  height: 18px;
  border: 0;
  background: none;
  display: grid;
  place-items: center;
`;
const MiniRule = styled.span`
  width: 1px;
  height: 12px;
  margin: 0 2px;
  background: #ccc;
`;
const ViewName = styled.strong`
  font-size: 11px;
  border-bottom: 1px solid #111;
  line-height: 12px;
  margin-right: 8px;
`;
const WinButton = styled.button`
  width: 15px;
  height: 15px;
  margin-left: 3px;
  border: 1px solid #b4b4b4;
  background: #ececec;
  display: grid;
  place-items: center;
`;
const Canvas = styled.div`
  flex: 1;
  min-height: 0;
  display: grid;
  border: 2px solid #14148a;
  outline: 1px solid #d5d3f4;
  background: #52576e;
  box-shadow: inset 0 0 0 1px #b9bde0;
  margin: 0 1px;
`;
const Scene = styled.svg`
  width: 100%;
  height: 100%;
  min-height: 0;
`;

const Status = styled.footer`
  height: 25px;
  flex: none;
  display: flex;
  align-items: center;
  padding: 3px 0 0 441px;
  gap: 3px;
`;
const StopButton = styled.button`
  width: 16px;
  height: 15px;
  border: 1px solid #bbb;
  background: #ccc;
  display: grid;
  place-items: center;
`;
const Progress = styled.div`
  flex: 1;
  height: 16px;
  border: 1px solid #d8d8d8;
  border-top-color: #888;
  border-left-color: #888;
`;

const menus: [string, string, string][] = [
  ['', 'F', 'ile'], ['', 'E', 'dit'], ['', 'V', 'iew'], ['', 'S', 'ources'], ['Fi', 'l', 'ters'],
  ['', 'T', 'ools'], ['', 'C', 'atalyst'], ['', 'M', 'acros'], ['', 'H', 'elp'],
];

const Tools = ({ names }: { names: string[] }) => (
  <>
    {names.map((n, i) => (n === '|' ? <Rule key={i} /> : <ToolButton key={n} aria-label={n}><Icon n={n} /></ToolButton>))}
  </>
);
const Minis = ({ names }: { names: string[] }) => (
  <>
    {names.map((n) => <MiniButton key={n} aria-label={n}><Icon n={n} s={12} /></MiniButton>)}
  </>
);
const GrayButtons = ({ names }: { names: string[] }) => (
  <>
    {names.map((n) => <PushButton key={n} $w={24} $off disabled aria-label={n}><Icon n={n} s={15} /></PushButton>)}
  </>
);
const Dock = ({ title }: { title: string }) => (
  <DockTitle>
    <DockName>{title}</DockName>
    <Plain aria-label="Float"><Icon n="winFloat" s={9} /></Plain>
    <Plain aria-label="Close"><Icon n="close" s={10} /></Plain>
  </DockTitle>
);
const Group = ({ title, top }: { title: string; top?: number }) => (
  <Line $gap={5} $top={top}>
    <GroupButton><Icon n="minus" s={12} /><Clip>{title}</Clip></GroupButton>
    <PushButton $w={24} aria-label="Copy"><Icon n="copy" s={15} /></PushButton>
    <PushButton $w={24} $off disabled aria-label="Paste"><Icon n="paste" s={15} /></PushButton>
    <PushButton $w={24} aria-label="Restore"><Icon n="refresh" s={16} /></PushButton>
  </Line>
);

const Duct = () => (
  <Scene viewBox="259 179 631 415" preserveAspectRatio="xMidYMid meet" role="img" aria-label="backstep.stl">
    <g stroke="#16168c" strokeWidth="1" strokeLinejoin="round">
      <path d="M321 332L394 346L396 444L327 425Z" fill="#86847d" />
      <path d="M327 425L396 403V444Z" fill="#bab5ab" stroke="none" />
      <path d="M321 332L396 404M327 425L396 403M327 425L396 421" fill="none" />
      <path d="M394 346L818 247L812 303L460 462L396 444Z" fill="#86847d" />
      <path d="M396 444L460 420V462Z" fill="#97948d" />
      <path d="M321 332L782 244L818 247L394 346Z" fill="#bdb8ad" />
      <path d="M394 346L782 244M394 346L460 420L818 247M460 420L812 303" fill="none" />
    </g>
    <path d="M311 543V516" stroke="#e6d93c" />
    <path d="M311 514L314 520H308Z" fill="#e6d93c" />
    <path d="M311 543L322 538" stroke="#c22" />
    <path d="M318 537L324 536L321 541Z" fill="#c22" />
    <path d="M311 543L332 546" stroke="#1fc93c" />
    <path d="M330 543L337 547L330 549Z" fill="#1fc93c" />
    <g fill="#fff" fontFamily="Liberation Sans" fontSize="8" fontStyle="italic" fontWeight="bold">
      <text x="313" y="519">Y</text><text x="322" y="538">x</text><text x="332" y="546">Z</text>
    </g>
  </Scene>
);

export default function App() {
  return (
    <Window>
      <Global />
      <TitleBar>
        <Icon n="logo" s={14} />
        <AppTitle>ParaView SC17 preview of 5.5 64-bit</AppTitle>
        <FrameButton aria-label="Minimize"><Icon n="thinMin" s={10} /></FrameButton>
        <FrameButton aria-label="Maximize"><Icon n="thinMax" s={11} /></FrameButton>
        <FrameButton aria-label="Close"><Icon n="thinClose" s={10} /></FrameButton>
      </TitleBar>
      <MenuBar>
        {menus.map(([a, u, b]) => <MenuItem key={b}>{a}<u>{u}</u>{b}</MenuItem>)}
      </MenuBar>

      <ToolRow>
        <Bar>
          <Tools names={['open', 'save', '|', 'connect', 'disconnect', '|', 'undo', 'redo', '|', 'load', 'find']} />
          <ToolButton aria-label="Palette"><Stacked n="palette" /><Corner n="down" s={6} /></ToolButton>
        </Bar>
        <Bar><Tools names={['first', 'prev', 'play', 'next', 'last', 'loop']} /></Bar>
        <Bar $end>
          <TimeLabel>Time:<TimeInput defaultValue="0" /></TimeLabel>
          <Spin>
            <SpinInput aria-label="Time step" defaultValue="0" />
            <SpinArrows>
              <SpinButton aria-label="Up"><Icon n="up" s={5} /></SpinButton>
              <SpinButton aria-label="Down"><Icon n="down" s={5} /></SpinButton>
            </SpinArrows>
          </Spin>
        </Bar>
      </ToolRow>
      <ToolRow>
        <Bar>
          <Tools names={['bar', 'colormap', 'chain', 'ruler', 'rulerC', 'rulerT', 'rulerEye']} />
          <Combo label="Color by" text="Solid Color" w={135} dot />
          <Combo label="Component" text="" w={62} off ml={3} />
        </Bar>
        <Bar><Combo label="Representation" text="Surface With Edges" w={135} /></Bar>
        <Bar $grow>
          <Tools names={['reset', 'zoomData', 'zoomBox', 'px', 'nx', 'py', 'ny', 'pz', 'nz']} />
          <Spacer />
          <ToolButton $w={12} aria-label="More"><Icon n="more" s={9} /></ToolButton>
        </Bar>
        <Bar>
          <ToolButton $on aria-label="Show axes"><Icon n="axes" /></ToolButton>
          <ToolButton $w={12} aria-label="More axes"><Icon n="more" s={9} /></ToolButton>
        </Bar>
        <Bar $end />
      </ToolRow>
      <ToolRow>
        <Bar><Tools names={['calc', 'contour', 'clip', 'slice', 'threshold', 'subset', 'glyph', 'stream', 'warp', 'group', 'extract']} /></Bar>
        <Bar $end><Tools names={['selView', 'plotClock', 'plotLine', 'plotSel', 'probe']} /></Bar>
      </ToolRow>

      <Main>
        <Side>
          <Dock title="Pipeline Browser" />
          <Tree>
            <TreeRow><span /><Node><Icon n="server" s={14} /></Node><TreeName>builtin:</TreeName></TreeRow>
            <TreeRow>
              <EyeMark n="eye" s={13} /><Node><Icon n="solid" s={15} /></Node><TreeName $sel>backstep.stl</TreeName>
            </TreeRow>
          </Tree>
          <Tabs><Tab>Information</Tab><Tab $on>Properties</Tab></Tabs>
          <Dock title="Properties" />
          <Panel>
            <Line>
              <PushButton $w={66} $off disabled><Icon n="apply" s={14} /><span><u>A</u>pply</span></PushButton>
              <PushButton $w={66} $off disabled><Icon n="no" s={14} /><span><u>R</u>eset</span></PushButton>
              <PushButton $w={66}><Icon n="del" s={13} /><span><u>D</u>elete</span></PushButton>
              <PushButton $w={23} aria-label="Help"><Icon n="help" s={15} /></PushButton>
            </Line>
            <Line $gap={3} $top={6}>
              <Search aria-label="Search" placeholder="Search ... (use Esc to clear text)" />
              <PushButton $w={20} $blue aria-label="Advanced"><Icon n="gear" s={16} /></PushButton>
            </Line>
            <ScrollGrid>
              <Viewport>
                <Content>
                  <Group title="Properties (backstep.stl)" />
                  <Group title="Display (GeometryRepresentation)" top={10} />
                  <Line $gap={4} $top={5}>
                    <FieldLabel htmlFor="rep">Representation</FieldLabel>
                    <SelectBox $w={160}><Native id="rep"><option>Surface With Edges</option></Native></SelectBox>
                  </Line>
                  <Heading $top={5}>Coloring</Heading>
                  <Line $top={6}>
                    <Combo label="Coloring" text="Solid Color" w={135} dot />
                    <Combo label="Coloring component" text="" w={77} off />
                  </Line>
                  <Line $gap={5} $top={5}>
                    <PushButton $w={67}><Icon n="colormap" s={14} />Edit</PushButton>
                    <GrayButtons names={['grayChain', 'grayRuler']} />
                    <Cluster><GrayButtons names={['grayRulerT', 'heart', 'grayBar']} /></Cluster>
                  </Line>
                  <Heading $top={6}>Scalar Coloring</Heading>
                  <Check $top={6}><CheckBox><input type="checkbox" defaultChecked /><Icon n="tick" s={9} /></CheckBox>Map Scalars</Check>
                  <Check $top={4}><CheckBox><input type="checkbox" defaultChecked /><Icon n="tick" s={9} /></CheckBox>Interpolate Scalars Before Mapping</Check>
                </Content>
              </Viewport>
              <VScroll><Icon n="chevUp" s={8} /><VThumb /><Icon n="chevDown" s={8} /></VScroll>
              <HScroll><Icon n="chevLeft" s={8} /><HThumb /><Icon n="chevRight" s={8} /></HScroll>
            </ScrollGrid>
          </Panel>
        </Side>
        <Work>
          <LayoutTabs>
            <LayoutTab $w={92} $on><Icon n="winMax" s={10} />Layout #1<Icon n="close" s={10} /></LayoutTab>
            <LayoutTab $w={24}>+</LayoutTab>
          </LayoutTabs>
          <ViewBar>
            <Minis names={['camUndo', 'camRedo']} /><MiniRule />
            <MiniButton>3D</MiniButton><Minis names={['camera']} /><MiniRule />
            <Minis names={['selAdd', 'selSub', 'selTog']} /><MiniRule />
            <Minis names={['sCells', 'sPts', 'sFrC', 'sFrP', 'sPoC', 'sPoP', 'sBlk', 'iC', 'iP', 'hP', 'hC', 'trash']} />
            <Spacer />
            <ViewName>RenderView1</ViewName>
            {['winSplitH', 'winSplitV', 'winMax', 'winFloat', 'close'].map((n) => (
              <WinButton key={n} aria-label={n}><Icon n={n} s={9} /></WinButton>
            ))}
          </ViewBar>
          <Canvas><Duct /></Canvas>
        </Work>
      </Main>
      <Status>
        <StopButton aria-label="Abort"><Icon n="stop" s={11} /></StopButton>
        <Progress />
        <Icon n="grip" s={12} />
      </Status>
    </Window>
  );
}
